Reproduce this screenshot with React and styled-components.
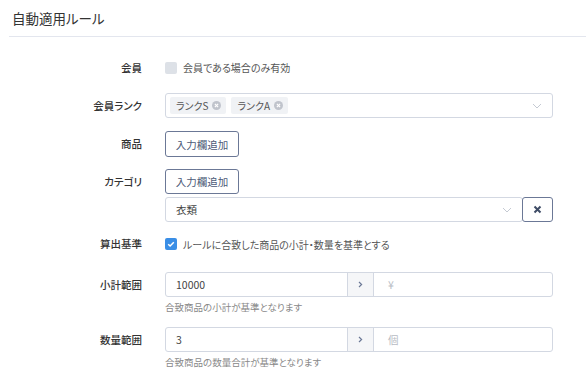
import React from 'react';
import styled, { createGlobalStyle } from 'styled-components';

const Global = createGlobalStyle`
  body {
    margin: 0;
    background: #fff;
    font-family: "Noto Sans CJK JP", "Noto Sans", sans-serif;
    font-feature-settings: "palt";
    color: #333;
  }
`;

const Page = styled.div`
  padding-left: 9px;
  width: 577px;
`;

const Header = styled.h1`
  margin: 0;
  height: 36px;
  display: flex;
  align-items: center;
  padding-left: 3px;
  font-size: 13.5px;
  font-weight: 400;
  color: #333;
  border-bottom: 1px solid #e3e6ee;
`;

const Form = styled.div`
  display: flex;
  flex-direction: column;
  padding-top: 18px;
`;

const Row = styled.div`
  display: grid;
  grid-template-columns: 133px 388px;
  column-gap: 23px;
  margin-top: ${p => p.$top || 0}px;
`;

const Label = styled.div`
  font-size: 10.5px;
  font-weight: 500;
  color: #333;
  text-align: right;
  height: ${p => p.$h || 25}px;
  line-height: ${p => p.$h || 25}px;
`;

const Control = styled.div`
  display: flex;
  flex-direction: column;
  gap: ${p => p.$gap || 0}px;
`;

const CheckLine = styled.label`
  display: flex;
  align-items: center;
  gap: 6px;
  height: ${p => p.$h || 25}px;
  font-size: 10px;
  color: #555;
`;

const Box = styled.span`
  width: 12px;
  height: 12px;
  border-radius: 2px;
  background: ${p => (p.$on ? '#3a8ee6' : '#dde1e7')};
  display: flex;
  align-items: center;
  justify-content: center;
`;

const Field = styled.div`
  height: 25px;
  box-sizing: border-box;
  border: 1px solid #d3d8e2;
  border-radius: 3px;
  display: flex;
  align-items: center;
  padding: 0 10px 0 ${p => p.$pl || 4}px;
  font-size: 10.5px;
  color: #444;
  flex: 1;
`;

const Tags = styled.div`
  display: flex;
  gap: 5px;
  flex: 1;
`;

const Tag = styled.span`
  display: inline-flex;
  align-items: center;
  gap: 4px;
  height: 17px;
  padding: 0 5px 0 6px;
  background: #f0f2f5;
  border-radius: 2px;
  font-size: 10px;
  color: #555;
`;

const Chevron = () => (
  <svg width="10" height="6" viewBox="0 0 10 6" style={{ marginLeft: 'auto' }}>
    <path d="M1 1l4 4 4-4" fill="none" stroke="#c5cad3" strokeWidth="1" />
  </svg>
);

const TagClose = () => (
  <svg width="9" height="9" viewBox="0 0 10 10">
    <circle cx="5" cy="5" r="5" fill="#c0c4cc" />
    <path d="M3.2 3.2l3.6 3.6M6.8 3.2l-3.6 3.6" stroke="#fff" strokeWidth="1.3" />
  </svg>
);

const Button = styled.button`
  align-self: flex-start;
  width: 74px;
  height: ${p => p.$h || 26}px;
  box-sizing: border-box;
  padding: 0;
  border: 1px solid #6b7896;
  border-radius: 3px;
  background: #fff;
  font-family: inherit;
  font-feature-settings: "palt";
  font-size: 10.5px;
  color: #4d5b78;
`;

const SelectRow = styled.div`
  display: flex;
`;

const IconButton = styled.button`
  width: 31px;
  height: 25px;
  box-sizing: border-box;
  margin-left: -1px;
  border: 1px solid #6b7896;
  border-radius: 3px;
  background: #fff;
  display: flex;
  align-items: center;
  justify-content: center;
  padding: 0;
`;

const Group = styled.div`
  display: grid;
  grid-template-columns: 181px 27px 1fr;
  height: 25px;
  box-sizing: border-box;
  border: 1px solid #d3d8e2;
  border-radius: 3px;
  font-size: 10.5px;
`;

const Cell = styled.div`
  display: flex;
  align-items: center;
  padding-left: ${p => p.$pl || 10}px;
  color: ${p => (p.$muted ? '#b8bcc4' : '#444')};
`;

const Addon = styled.div`
  background: #f5f6f8;
  border-left: 1px solid #d3d8e2;
  border-right: 1px solid #d3d8e2;
  display: flex;
  align-items: center;
  justify-content: center;
`;

const Help = styled.div`
  font-size: 9.5px;
  color: #888;
  margin-top: 3px;
  line-height: 14px;
`;

const Check = () => (
  <svg width="8" height="8" viewBox="0 0 8 8">
    <path d="M1.2 4.2l1.9 1.8 3.7-3.8" fill="none" stroke="#fff" strokeWidth="1.5" />
  </svg>
);

const Gt = () => (
  <svg width="5" height="7" viewBox="0 0 5 7">
    <path d="M1 1l2.6 2.5L1 6" fill="none" stroke="#6b7896" strokeWidth="1.2" />
  </svg>
);

const Range = ({ label, value, unit, help, top }) => (
  <Row $top={top}>
    <Label>{label}</Label>
    <Control>
      <Group>
        <Cell>{value}</Cell>
        <Addon><Gt /></Addon>
        <Cell $muted $pl={14}>{unit}</Cell>
      </Group>
      <Help>{help}</Help>
    </Control>
  </Row>
);

export default function App() {
  return (
    <Page>
      <Global />
      <Header>自動適用ルール</Header>
      <Form>
        <Row>
          <Label>会員</Label>
          <CheckLine>
            <Box />
            会員である場合のみ有効
          </CheckLine>
        </Row>
        <Row $top={13}>
          <Label>会員ランク</Label>
          <Field>
            <Tags>
              <Tag>ランクS<TagClose /></Tag>
              <Tag>ランクA<TagClose /></Tag>
            </Tags>
            <Chevron />
          </Field>
        </Row>
        <Row $top={13}>
          <Label $h={26}>商品</Label>
          <Control>
            <Button>入力欄追加</Button>
          </Control>
        </Row>
        <Row $top={12}>
          <Label>カテゴリ</Label>
          <Control $gap={3}>
            <Button $h={25}>入力欄追加</Button>
            <SelectRow>
              <Field $pl={10}>
                衣類
                <Chevron />
              </Field>
              <IconButton>
                <svg width="9" height="9" viewBox="0 0 9 9">
                  <path d="M1.5 1.5l6 6M7.5 1.5l-6 6" stroke="#3f4c66" strokeWidth="2" />
                </svg>
              </IconButton>
            </SelectRow>
          </Control>
        </Row>
        <Row $top={12}>
          <Label $h={20}>算出基準</Label>
          <CheckLine $h={20}>
            <Box $on><Check /></Box>
            ルールに合致した商品の小計・数量を基準とする
          </CheckLine>
        </Row>
        <Range top={18} label="小計範囲" value="10000" unit="¥" help="合致商品の小計が基準となります" />
        <Range top={13} label="数量範囲" value="3" unit="個" help="合致商品の数量合計が基準となります" />
      </Form>
    </Page>
  );
}
